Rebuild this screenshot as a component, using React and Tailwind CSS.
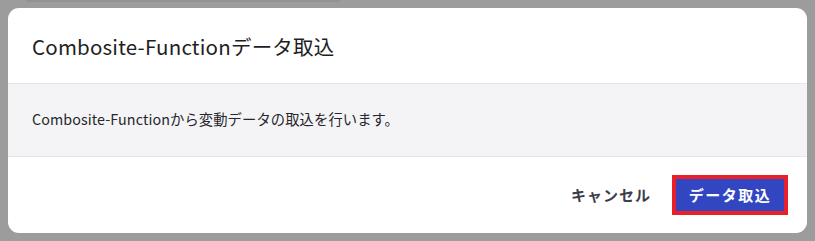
import React from 'react'

const font = { fontFamily: '"Noto Sans CJK JP", "Noto Sans", sans-serif' }

const App = () => {
  return (
    <div className="w-[815px] h-[241px] bg-[#9c9c9c] overflow-hidden" style={font}>
      {/* faint strip of the page behind */}
      <div className="ml-[27px] w-[313px] h-[2px] bg-[#929292]" />
      <div className="pl-[8px] pt-[6px]">
        <div className="w-[799px] h-[225px] bg-white rounded-[11px] flex flex-col overflow-hidden">
          <div className="h-[76px] flex items-center px-[24px] border-b border-[#e6e6ea]">
            <h2 className="text-[20.5px] leading-none text-[#1e1e24] tracking-[0.2px] pt-[1px]">
              Combosite-Functionデータ取込
            </h2>
          </div>
          <div className="h-[73px] bg-[#f4f4f6] flex items-center px-[24px] border-b border-[#e6e6ea]">
            <p className="text-[14.3px] text-[#26262c] tracking-[0.1px] pb-[2px]">
              Combosite-Functionから変動データの取込を行います。
            </p>
          </div>
          <div className="flex-1 flex items-center justify-end pr-[19px] gap-[21px]">
            <button className="text-[15px] font-bold text-[#3d3d4a] tracking-[1px]">キャンセル</button>
            <button className="w-[116px] h-[40px] border-[4px] border-[#e8202a] bg-[#3346c2] text-white text-[15px] font-bold tracking-[1.5px] flex items-center justify-center">
              データ取込
            </button>
          </div>
        </div>
      </div>
    </div>
  )
}

export default App
